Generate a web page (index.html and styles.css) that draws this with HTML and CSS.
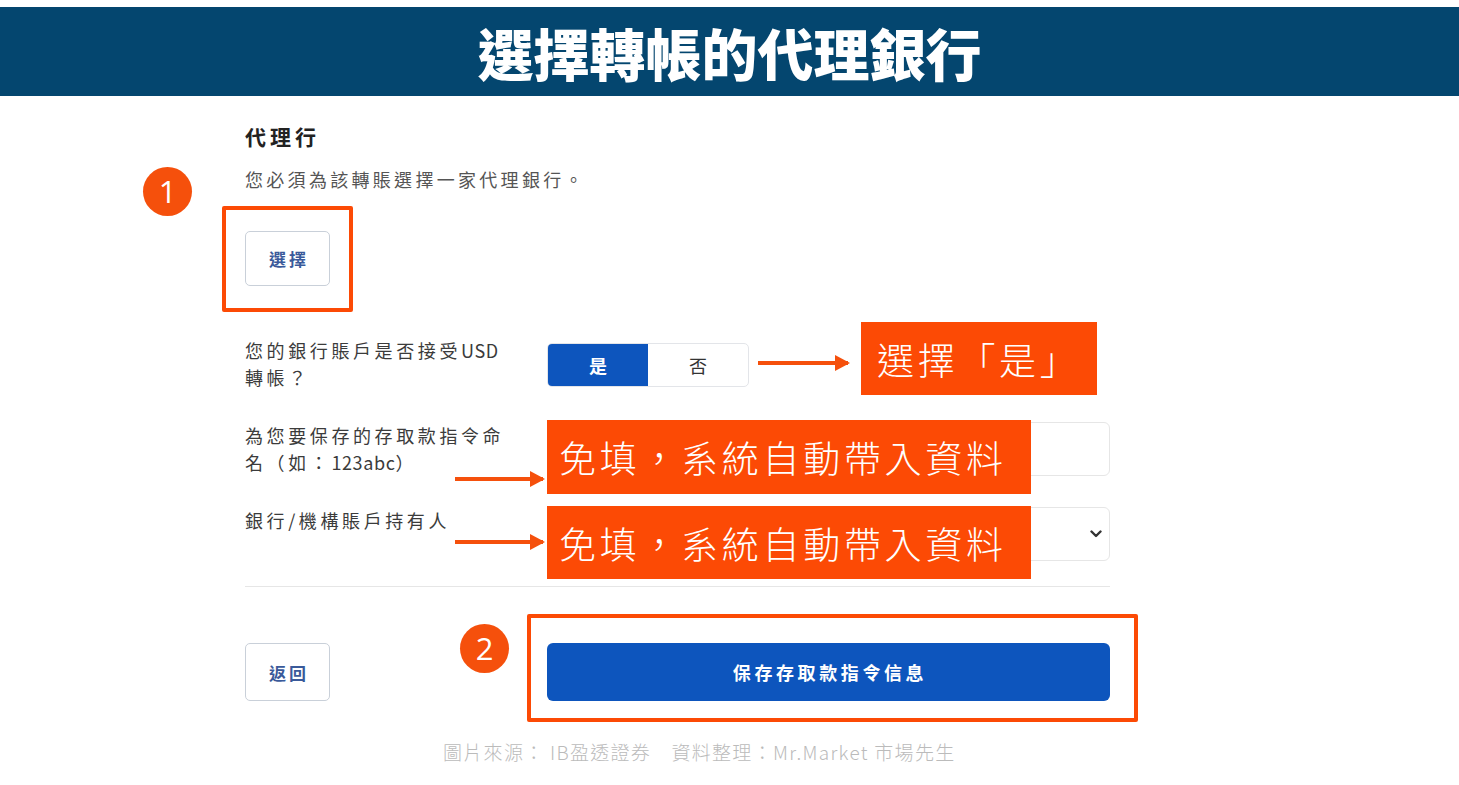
FILE: index.html
```html
<!DOCTYPE html>
<html lang="zh-Hant">
<head>
<meta charset="utf-8">
<title>選擇轉帳的代理銀行</title>
<link rel="stylesheet" href="styles.css">
</head>
<body>
<header class="banner"><h1>選擇轉帳的代理銀行</h1></header>

<section class="form">
  <h2 class="form-title">代理行</h2>
  <p class="hint">您必須為該轉賬選擇一家代理銀行。</p>
  <button class="btn-outline select-btn">選擇</button>

  <div class="row row-usd">
    <label class="row-label">您的銀行賬戶是否接受<span class="latin">USD</span><br>轉帳？</label>
    <div class="toggle"><span class="seg on">是</span><span class="seg">否</span></div>
  </div>

  <div class="row row-gap">
    <label class="row-label">為您要保存的存取款指令命<br>名（如：<span class="latin">123abc</span>）</label>
    <div class="field"></div>
  </div>

  <div class="row row-gap">
    <label class="row-label">銀行/機構賬戶持有人</label>
    <div class="field field-select">
      <svg class="chevron" width="12" height="8" viewBox="0 0 12 8"><polyline points="1.5,1.5 6,6 10.5,1.5" fill="none" stroke="#333" stroke-width="2.4" stroke-linecap="round" stroke-linejoin="round"/></svg>
    </div>
  </div>

  <div class="divider"></div>

  <div class="actions">
    <button class="btn-outline btn-back">返回</button>
    <button class="btn-save">保存存取款指令信息</button>
  </div>
</section>

<p class="credit">圖片來源： IB盈透證券　資料整理：Mr.Market 市場先生</p>

<!-- annotations -->
<div class="mark mark-1">1</div>
<div class="frame frame-1"></div>
<div class="mark mark-2">2</div>
<div class="frame frame-2"></div>

<div class="arrow arrow-1"></div>
<div class="arrow arrow-2"></div>
<div class="arrow arrow-3"></div>

<div class="callout callout-1">選擇「是」</div>
<div class="callout callout-2">免填，系統自動帶入資料</div>
<div class="callout callout-3">免填，系統自動帶入資料</div>
</body>
</html>
```

FILE: styles.css
```css
* { box-sizing: border-box; }

body {
  margin: 0;
  position: relative;
  width: 1459px;
  height: 785px;
  overflow: hidden;
  background: #ffffff;
  font-family: "Noto Sans CJK TC", "Noto Sans", sans-serif;
}

.banner {
  margin-top: 7px;
  height: 89px;
  background: #04466f;
  display: flex;
  align-items: center;
  justify-content: center;
}

.banner h1 {
  margin: 0;
  color: #ffffff;
  font-size: 56px;
  line-height: 1;
  font-weight: 900;
  letter-spacing: 0;
}

.form {
  margin-left: 245px;
  width: 865px;
}

.form-title {
  margin: 25px 0 0;
  font-size: 21px;
  line-height: 30px;
  font-weight: 700;
  color: #222222;
  letter-spacing: 4px;
}

.hint {
  margin: 15px 0 0;
  font-size: 18px;
  line-height: 26px;
  color: #555555;
  letter-spacing: 3.3px;
}

.btn-outline {
  display: flex;
  align-items: center;
  justify-content: center;
  width: 85px;
  height: 55px;
  padding: 0 0 0 3px;
  border: 1px solid #c9d0d9;
  border-radius: 5px;
  background: #ffffff;
  color: #3a5a9a;
  font-family: "Noto Sans CJK TC", sans-serif;
  font-size: 17px;
  font-weight: 700;
  letter-spacing: 3px;
}

.select-btn { margin-top: 39px; }

.row {
  display: flex;
  align-items: flex-start;
}

.row-label {
  width: 302px;
  flex: none;
  font-size: 18px;
  line-height: 27px;
  color: #3b3b3b;
  letter-spacing: 3.6px;
}

.latin {
  letter-spacing: 0.6px;
}

.row-usd { margin-top: 51px; }
.row-gap { margin-top: 31px; }

.toggle {
  margin-top: 6px;
  display: flex;
  width: 202px;
  height: 44px;
  border: 1px solid #e3e5e9;
  border-radius: 5px;
  overflow: hidden;
}

.seg {
  flex: 1;
  display: flex;
  align-items: center;
  justify-content: center;
  font-size: 18px;
  color: #333333;
}

.seg.on {
  background: #0d55bd;
  color: #ffffff;
  font-weight: 700;
}

.field {
  flex: 1;
  height: 54px;
  border: 1px solid #e6e6e6;
  border-radius: 6px;
  display: flex;
  align-items: center;
  justify-content: flex-end;
  padding-right: 7px;
}

.divider {
  margin-top: 25px;
  height: 1px;
  background: #e6e6e6;
}

.actions {
  margin-top: 56px;
  display: flex;
  justify-content: space-between;
}

.btn-back {
  height: 58px;
}

.btn-save {
  width: 563px;
  height: 58px;
  padding: 0 0 0 3px;
  border: none;
  border-radius: 6px;
  background: #0d55bd;
  color: #ffffff;
  font-family: "Noto Sans CJK TC", sans-serif;
  font-size: 18px;
  font-weight: 700;
  letter-spacing: 3.6px;
}

.credit {
  margin: 38px 0 0 443px;
  font-size: 19px;
  line-height: 26px;
  color: #bbbbbb;
  font-weight: 300;
  letter-spacing: 1.3px;
  white-space: nowrap;
}

/* annotations */
.mark {
  position: absolute;
  width: 49px;
  height: 49px;
  border-radius: 50%;
  background: #f5500c;
  color: #ffffff;
  font-size: 31px;
  line-height: 49px;
  text-align: center;
  font-family: "Open Sans", "Noto Sans", sans-serif;
}

.mark-1 { left: 143px; top: 167px; }
.mark-2 { left: 460px; top: 624px; }

.frame {
  position: absolute;
  border: 4px solid #fc4a05;
  border-radius: 2px;
}

.frame-1 { left: 222px; top: 206px; width: 131px; height: 106px; }
.frame-2 { left: 527px; top: 614px; width: 611px; height: 108px; }

.arrow {
  position: absolute;
  height: 4px;
  background: #f5500c;
}

.arrow::after {
  content: "";
  position: absolute;
  right: -2px;
  top: -6px;
  border-left: 15px solid #f5500c;
  border-top: 8px solid transparent;
  border-bottom: 8px solid transparent;
}

.arrow-1 { left: 758px; top: 361px; width: 90px; }
.arrow-2 { left: 455px; top: 477px; width: 88px; }
.arrow-3 { left: 455px; top: 540px; width: 88px; }

.callout {
  position: absolute;
  background: #fc4a05;
  color: #ffffff;
  font-size: 37px;
  font-weight: 300;
  letter-spacing: 3.7px;
  display: flex;
  align-items: center;
  white-space: nowrap;
}

.callout-1 { left: 861px; top: 322px; width: 236px; height: 73px; padding-left: 16px; }
.callout-2 { left: 547px; top: 420px; width: 484px; height: 74px; padding-left: 12px; }
.callout-3 { left: 547px; top: 506px; width: 484px; height: 73px; padding-left: 12px; }
```
